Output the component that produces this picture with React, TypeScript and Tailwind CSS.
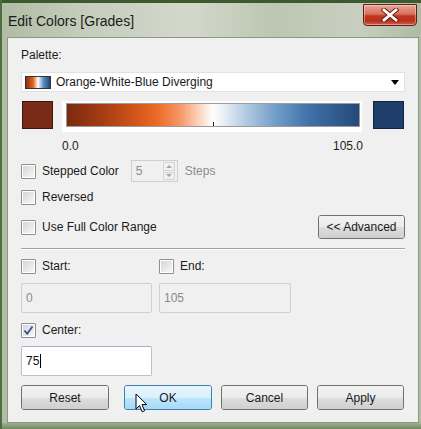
import React from "react";

const Checkbox = ({ checked }: { checked?: boolean }) => (
  <div className="w-[15px] h-[15px] shrink-0 border border-[#8e8f8f] bg-white p-[1px] rounded-[1px]">
    <div className="w-full h-full bg-linear-to-br from-[#d4d6da] to-[#f7f7f7] flex items-center justify-center">
      {checked && (
        <svg width="11" height="11" viewBox="0 0 11 11">
          <path d="M1.5 5.5 L4.2 8.8 L9.5 1.5" fill="none" stroke="#3c5495" strokeWidth="1.8" />
        </svg>
      )}
    </div>
  </div>
);

const Btn = ({ label, w, hover, children }: { label: string; w: string; hover?: boolean; children?: React.ReactNode }) => (
  <div
    className={
      "relative h-[25px] rounded-[3px] border flex flex-col overflow-visible " +
      w +
      (hover ? " border-[#3c7fb1]" : " border-[#707070]")
    }
  >
    <div className={"h-1/2 rounded-t-[2px] " + (hover ? "bg-linear-to-b from-[#eaf6fd] to-[#d9f0fc]" : "bg-linear-to-b from-[#f2f2f2] to-[#ebebeb]")} />
    <div className={"h-1/2 rounded-b-[2px] " + (hover ? "bg-linear-to-b from-[#bee6fd] to-[#a7d9f5]" : "bg-linear-to-b from-[#dddddd] to-[#cfcfcf]")} />
    <div className="absolute inset-0 flex items-center justify-center text-[12px] text-[#1a1a1a]">{label}</div>
    {children}
  </div>
);

export default function App() {
  return (
    <div className="w-[421px] h-[429px] overflow-hidden relative font-['Liberation_Sans',Arial,sans-serif] bg-[linear-gradient(to_right,#b0bca4_0%,#c6cdbc_20%,#d3d8cb_45%,#bcc6b1_65%,#c9cfc0_85%,#aebaa2_100%)] border-l-2 border-[#4f6e3f] flex flex-col">
      {/* top dark strip */}
      <div className="h-[3px] bg-[#3d5a2f] shrink-0 -ml-[2px]" />
      {/* title bar */}
      <div className="h-[34px] shrink-0 flex items-start justify-between">
        <div className="mt-[8px] ml-[6px] text-[14px] leading-[20px] text-[#1b1b1b]">Edit Colors [Grades]</div>
        <div className="mt-[1px] mr-[4px] w-[54px] h-[22px] rounded-b-[4px] border border-[#5e2119] bg-[linear-gradient(to_bottom,#e9a495_0%,#d9705c_45%,#c1361f_55%,#b8321c_80%,#d2614a_100%)] flex items-center justify-center shadow-[inset_0_0_0_1px_rgba(255,255,255,0.35)]">
          <svg width="18" height="14" viewBox="0 0 18 14">
            <path d="M3 2 L15 12 M15 2 L3 12" stroke="#5a1a10" strokeWidth="4.6" strokeLinecap="square" />
            <path d="M3 2 L15 12 M15 2 L3 12" stroke="#ffffff" strokeWidth="2.8" strokeLinecap="square" />
          </svg>
        </div>
      </div>
      {/* panel */}
      <div className="ml-[5px] w-[412px] h-[386px] shrink-0 border border-[#8c9884] bg-[#f0f0f0] px-[13px] pt-[9px] flex flex-col text-[12px] text-[#1a1a1a]">
        <div className="h-[16px] leading-[16px]">Palette:</div>
        {/* dropdown */}
        <div className="mt-[9px] h-[20px] bg-white border border-[#e2e2e2] flex items-center">
          <div className="ml-[3px] w-[26px] h-[13px] border border-[#333] bg-[linear-gradient(to_right,#8a2e0c_0%,#e2661f_30%,#ffffff_50%,#5f8fc0_72%,#1f4677_100%)]" />
          <div className="ml-[5px] leading-[16px]">Orange-White-Blue Diverging</div>
          <div className="ml-auto mr-[5px] w-0 h-0 border-l-[4px] border-r-[4px] border-t-[5px] border-l-transparent border-r-transparent border-t-black" />
        </div>
        {/* swatches */}
        <div className="mt-[9px] h-[31px] flex items-start">
          <div className="ml-[1px] w-[31px] h-[28px] border border-[#3a1a10] bg-[#7a2b17]" />
          <div className="ml-[9px] w-[300px] h-[31px] bg-white pl-[4px] pr-[2px] pt-[2px]">
            <div className="relative h-[24px] border border-[#9a9a9a] bg-[linear-gradient(to_right,#7a2a0f_0%,#a53c12_12%,#d4561a_24%,#ec6b26_31%,#f7996a_39%,#fcd2bc_45%,#ffffff_50%,#dfe8f1_55%,#adc7df_62%,#6f9bc7_72%,#3f71a8_83%,#24497a_100%)]">
              <div className="absolute left-[146px] bottom-0 w-[1px] h-[4px] bg-[#222]" />
            </div>
          </div>
          <div className="ml-[11px] w-[31px] h-[28px] border border-[#12243f] bg-[#1f3f6b]" />
        </div>
        {/* numbers */}
        <div className="mt-[6px] h-[16px] ml-[41px] w-[301px] flex justify-between leading-[16px] text-[#222]">
          <span>0.0</span>
          <span>105.0</span>
        </div>
        {/* stepped */}
        <div className="mt-[6px] h-[22px] flex items-center">
          <Checkbox />
          <div className="ml-[6px] leading-[16px]">Stepped Color</div>
          <div className="ml-[12px] w-[47px] h-[22px] border border-[#cfcfcf] bg-[#f0f0f0] flex items-center">
            <span className="ml-[4px] text-[#8a8a8a]">5</span>
            <div className="ml-auto mr-[2px] w-[12px] h-[18px] flex flex-col gap-[1px]">
              <div className="flex-1 border border-[#d6d6d6] flex items-center justify-center">
                <div className="w-0 h-0 border-l-[3px] border-r-[3px] border-b-[3px] border-l-transparent border-r-transparent border-b-[#a8a8a8]" />
              </div>
              <div className="flex-1 border border-[#d6d6d6] flex items-center justify-center">
                <div className="w-0 h-0 border-l-[3px] border-r-[3px] border-t-[3px] border-l-transparent border-r-transparent border-t-[#a8a8a8]" />
              </div>
            </div>
          </div>
          <div className="ml-[7px] text-[#8d8d8d] leading-[16px]">Steps</div>
        </div>
        {/* reversed */}
        <div className="mt-[7px] h-[16px] flex items-center">
          <Checkbox />
          <div className="ml-[6px] leading-[16px]">Reversed</div>
        </div>
        {/* full range */}
        <div className="mt-[10px] h-[24px] flex items-center">
          <Checkbox />
          <div className="ml-[6px] leading-[16px]">Use Full Color Range</div>
          <div className="ml-auto">
            <Btn label="<< Advanced" w="w-[87px] !h-[24px]" />
          </div>
        </div>
        {/* separator */}
        <div className="mt-[9px] h-[2px] border-t border-[#a3a3a3] border-b border-b-white" />
        {/* start / end */}
        <div className="mt-[8px] h-[16px] flex items-center">
          <div className="w-[138px] flex items-center">
            <Checkbox />
            <div className="ml-[6px] leading-[16px]">Start:</div>
          </div>
          <Checkbox />
          <div className="ml-[6px] leading-[16px]">End:</div>
        </div>
        <div className="mt-[9px] h-[30px] flex">
          <div className="w-[131px] h-[30px] border border-[#cfcfcf] rounded-[2px] bg-[#f0f0f0] flex items-center pl-[4px] text-[#8a8a8a]">0</div>
          <div className="ml-[7px] w-[132px] h-[30px] border border-[#cfcfcf] rounded-[2px] bg-[#f0f0f0] flex items-center pl-[4px] text-[#8a8a8a]">105</div>
        </div>
        {/* center */}
        <div className="mt-[9px] h-[16px] flex items-center">
          <Checkbox checked />
          <div className="ml-[6px] leading-[16px]">Center:</div>
        </div>
        <div className="mt-[8px] w-[131px] h-[30px] border border-[#b4c3d6] border-t-[#9fb3cc] rounded-[2px] bg-white flex items-center pl-[4px] text-[#111]">
          <span>75</span>
          <span className="ml-[1px] w-[1px] h-[14px] bg-black" />
        </div>
        {/* buttons */}
        <div className="mt-[9px] h-[25px] flex">
          <Btn label="Reset" w="w-[88px]" />
          <div className="ml-[15px]">
            <Btn label="OK" w="w-[88px]" hover>
              <svg className="absolute left-[10px] top-[7px]" width="13" height="21" viewBox="0 0 13 21">
                <path d="M1 1 L1 16 L4.5 12.5 L7.2 18.8 L9.6 17.8 L7 11.6 L11.8 11.6 Z" fill="#ffffff" stroke="#000" strokeWidth="1" strokeLinejoin="round" />
              </svg>
            </Btn>
          </div>
          <div className="ml-[9px]">
            <Btn label="Cancel" w="w-[87px]" />
          </div>
          <div className="ml-[9px]">
            <Btn label="Apply" w="w-[87px]" />
          </div>
        </div>
      </div>
      <div className="flex-1 bg-[linear-gradient(to_bottom,#9fae92,#6f8a5e)]" />
    </div>
  );
}
